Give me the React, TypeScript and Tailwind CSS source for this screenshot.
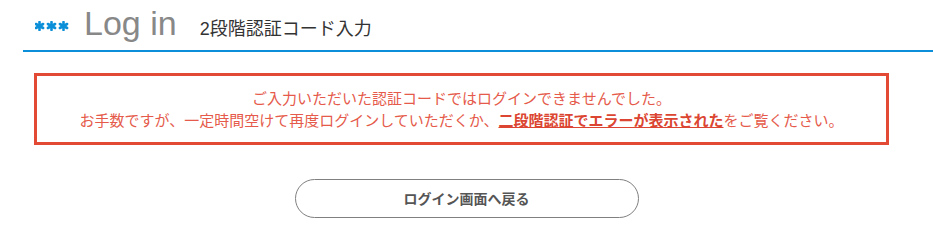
import React from 'react';

function Stars() {
  // three bold blue asterisks before the title
  const centers = [4.5, 16.5, 28.5];
  return (
    <svg width="34" height="10" viewBox="0 0 34 10" className="shrink-0 self-center -mt-[4px]">
      {centers.map((cx) => (
        <g key={cx} stroke="#0b8fd9" strokeWidth="2.6" strokeLinecap="round">
          <line x1={cx} y1={1} x2={cx} y2={9} />
          <line x1={cx - 3.6} y1={3} x2={cx + 3.6} y2={7} />
          <line x1={cx - 3.6} y1={7} x2={cx + 3.6} y2={3} />
        </g>
      ))}
    </svg>
  );
}

export default function App() {
  return (
    <div className="w-[933px] h-[232px] bg-white overflow-hidden font-['Liberation_Sans','Noto_Sans_CJK_JP',sans-serif]">
      {/* Header */}
      <div className="ml-[23px] h-[52px] border-b-2 border-[#0b8fd9] flex items-baseline pl-[12px] pt-[6px]">
        <Stars />
        <span className="ml-[15px] text-[34px] leading-none text-[#888888] font-['Liberation_Sans',sans-serif]">
          Log in
        </span>
        <span className="ml-[23px] text-[18px] leading-none text-[#333333]">
          2段階認証コード入力
        </span>
      </div>

      {/* Error box */}
      <div className="mt-[21px] ml-[34px] w-[855px] border-[3px] border-[#e24a35] py-[11px] text-center text-[15px] leading-[22px] text-[#e55a4a] font-['Noto_Sans_CJK_JP',sans-serif]">
        <p>ご入力いただいた認証コードではログインできませんでした。</p>
        <p>
          お手数ですが、一定時間空けて再度ログインしていただくか、
          <a href="#" className="font-bold underline text-[#db4531]">
            二段階認証でエラーが表示された
          </a>
          をご覧ください。
        </p>
      </div>

      {/* Back button */}
      <div className="mt-[34px] flex justify-center">
        <button
          type="button"
          className="w-[344px] h-[39px] rounded-full border border-[#808080] bg-white text-[14px] font-bold text-[#555555] font-['Noto_Sans_CJK_JP',sans-serif]"
        >
          ログイン画面へ戻る
        </button>
      </div>
    </div>
  );
}
